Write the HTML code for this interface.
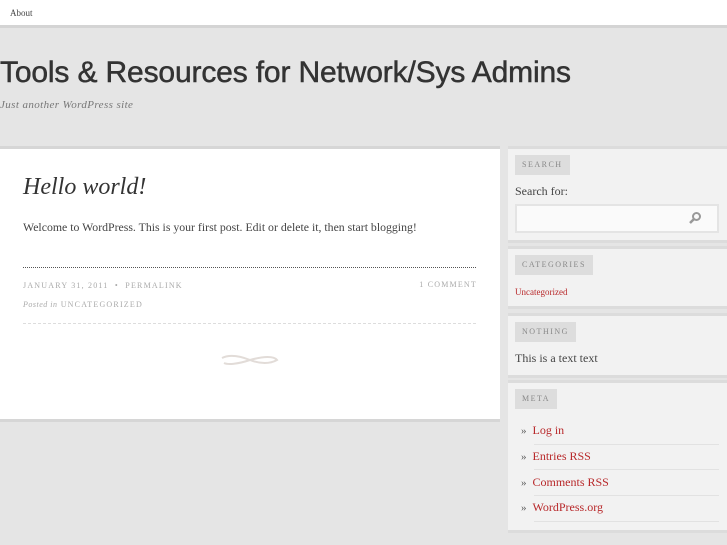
<!DOCTYPE html>
<html><head><style>
*{margin:0;padding:0;box-sizing:border-box}
body{width:727px;height:545px;overflow:hidden;background:#e5e5e5;font-family:"Liberation Serif",serif;position:relative}
.top{position:absolute;left:0;top:0;width:727px;height:28px;background:#fff;border-bottom:3px solid #d4d4d4}
.top a{position:absolute;left:10px;top:8px;font-size:9px;color:#444;font-family:"Liberation Serif",serif}
h1{position:absolute;left:0;top:56px;font-family:"Liberation Sans",sans-serif;font-size:30px;color:#333;font-weight:normal;letter-spacing:-0.15px;-webkit-text-stroke:0.5px #333;white-space:nowrap}
.desc{position:absolute;left:0;top:99px;font-size:11px;font-style:italic;color:#777;letter-spacing:0.4px}
.post{position:absolute;left:0;top:146px;width:500px;height:276px;background:#fff;border-top:3px solid #d6d6d6;border-bottom:3px solid #d6d6d6}
.post h2{position:absolute;left:23px;top:25px;font-size:24px;font-style:italic;font-weight:normal;color:#333}
.post p{position:absolute;left:23px;top:71px;font-size:11.8px;color:#444}
.dl{position:absolute;left:23px;width:453px;top:118px;border-top:1px dotted #555}
.dl2{position:absolute;left:23px;width:453px;top:174px;border-top:1px dashed #ddd}
.meta{position:absolute;font-size:8px;letter-spacing:1.2px;color:#aaa}
.w{position:absolute;left:508px;width:219px;background:#f2f2f2;border-top:3px solid #dcdcdc;border-bottom:3px solid #dcdcdc}
.lab{position:absolute;left:7px;top:6px;background:#ddd;color:#888;font-size:8px;letter-spacing:1.5px;padding:6px 7px;line-height:8px}
.t{position:absolute;left:7px;font-size:12px;color:#444}
.red{color:#b8282a}
.li{position:absolute;left:13px;font-size:12px;width:198px}
.li b{font-weight:normal;color:#555;font-size:11px;margin-right:6px}
.ln{position:absolute;left:26px;width:185px;border-top:1px solid #e2e2e2}
</style></head><body>
<div class="top"><a>About</a></div>
<h1>Tools &amp; Resources for Network/Sys Admins</h1>
<div class="desc">Just another WordPress site</div>
<div class="post">
<h2>Hello world!</h2>
<p>Welcome to WordPress. This is your first post. Edit or delete it, then start blogging!</p>
<div class="dl"></div>
<div class="meta" style="left:23px;top:132px">JANUARY 31, 2011 &nbsp;• &nbsp;PERMALINK</div>
<div class="meta" style="right:23px;top:131px">1 COMMENT</div>
<div class="meta" style="left:23px;top:151px"><i style="letter-spacing:0.5px">Posted in</i> UNCATEGORIZED</div>
<div class="dl2"></div>
<svg style="position:absolute;left:220px;top:203px" width="60" height="16"><path d="M2 6 C10 2 20 4 30 8 C40 12 50 12 57 8 C54 4 44 4 30 8 C18 12 8 13 4 11" fill="none" stroke="#e2dcd8" stroke-width="2"/></svg>
</div>
<div class="w" style="top:146px;height:97px">
<div class="lab">SEARCH</div>
<div class="t" style="top:35px">Search for:</div>
<div style="position:absolute;left:7px;top:55px;width:204px;height:29px;background:#fafafa;border:2px solid #e4e4e4"></div>
<svg style="position:absolute;left:180px;top:62px" width="14" height="14"><circle cx="8.5" cy="5.5" r="3.5" fill="none" stroke="#999" stroke-width="2"/><path d="M6 8 L2 12" stroke="#999" stroke-width="2.5"/></svg>
</div>
<div class="w" style="top:246px;height:63px">
<div class="lab">CATEGORIES</div>
<div class="t red" style="top:38px;font-size:9px">Uncategorized</div>
</div>
<div class="w" style="top:313px;height:65px">
<div class="lab">NOTHING</div>
<div class="t" style="top:35px">This is a text text</div>
</div>
<div class="w" style="top:380px;height:153px">
<div class="lab">META</div>
<div class="li red" style="top:40px"><b>»</b>Log in</div>
<div class="ln" style="top:61px"></div>
<div class="li red" style="top:66px"><b>»</b>Entries RSS</div>
<div class="ln" style="top:86px"></div>
<div class="li red" style="top:92px"><b>»</b>Comments RSS</div>
<div class="ln" style="top:112px"></div>
<div class="li red" style="top:117px"><b>»</b>WordPress.org</div>
<div class="ln" style="top:138px"></div>
</div>
</body></html>
